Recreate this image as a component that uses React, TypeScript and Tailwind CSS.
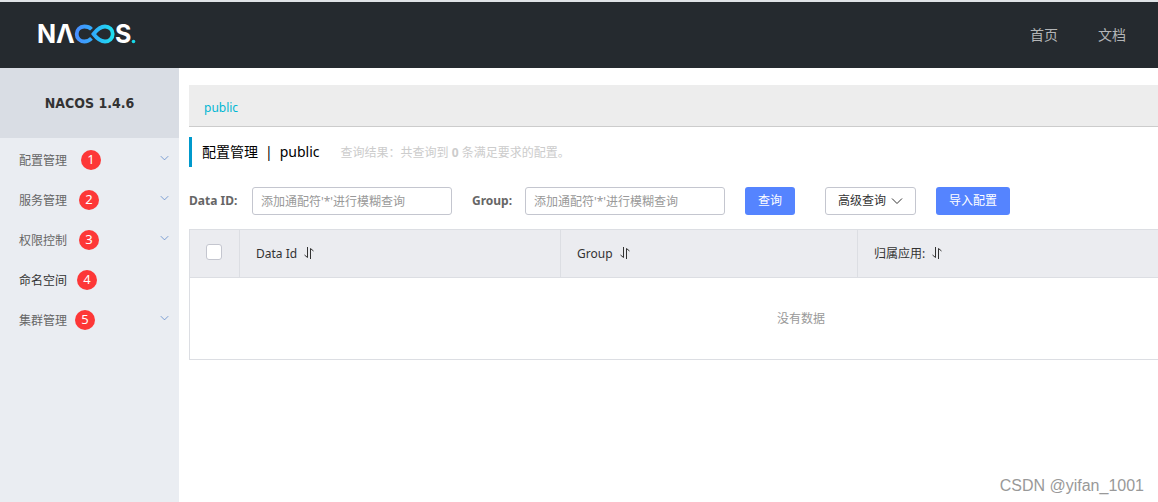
import type { ReactNode } from "react";

type MenuItem = {
  label: string;
  step: number;
  gap: string;
  expandable: boolean;
};

const menu: MenuItem[] = [
  { label: "配置管理", step: 1, gap: "ml-3.5", expandable: true },
  { label: "服务管理", step: 2, gap: "ml-3", expandable: true },
  { label: "权限控制", step: 3, gap: "ml-3", expandable: true },
  { label: "命名空间", step: 4, gap: "ml-2.5", expandable: false },
  { label: "集群管理", step: 5, gap: "ml-2", expandable: true },
];

function Logo() {
  return (
    <svg
      width="106"
      height="36"
      viewBox="-4 -7 106 36"
      role="img"
      aria-label="Nacos"
      className="font-['Inter','Noto_Sans',sans-serif] text-[25px] font-bold"
    >
      <defs>
        <linearGradient id="loop" gradientUnits="userSpaceOnUse" x1="37" y1="0" x2="77" y2="0">
          <stop offset="0" stopColor="#4a8cff" />
          <stop offset="0.5" stopColor="#2fb0fa" />
          <stop offset="1" stopColor="#1de4ee" />
        </linearGradient>
      </defs>
      <text x="-1" y="19" fill="#fff">N</text>
      <text x="18" y="19" fill="#fff">Λ</text>
      <text x="77" y="19" fill="#fff">S</text>
      <g fill="none" stroke="url(#loop)" strokeWidth="3.8">
        <path d="M53.5 5.2C51.6 3.2 49.3 2.5 46.3 2.5C41.7 2.5 38.7 5.9 38.7 10C38.7 14.1 41.7 17.5 46.3 17.5C49.3 17.5 51.5 16.4 53.5 14.4" />
        <path d="M55.5 10C59 5.5 61.9 2.5 67 2.5C71.5 2.5 74.7 5.9 74.7 10C74.7 14.1 71.5 17.5 67 17.5C61.9 17.5 59 14.5 55.5 10Z" />
      </g>
      <circle cx="95.5" cy="17.5" r="1.8" fill="#17d8e8" />
    </svg>
  );
}

function ChevronDown({ className }: { className: string }) {
  return (
    <svg viewBox="0 0 12 8" fill="none" stroke="currentColor" className={className} aria-hidden="true">
      <path d="M1 1.5L6 6.5L11 1.5" />
    </svg>
  );
}

function SortIcon() {
  return (
    <svg width="12" height="12" viewBox="0 0 12 12" fill="none" stroke="currentColor" aria-hidden="true">
      <path d="M4.5 0V10.5L1.5 8M7.5 12V1.5L10.5 4" />
    </svg>
  );
}

function SortableHead({ className, children }: { className?: string; children: ReactNode }) {
  return (
    <th className={`border-l border-[#dcdee3] px-4 text-left font-normal ${className ?? ""}`}>
      <span className="flex items-center gap-1.5">
        {children}
        <button type="button" aria-label="排序" className="pb-0.5">
          <SortIcon />
        </button>
      </span>
    </th>
  );
}

function Header() {
  return (
    <header className="flex h-[68px] items-center justify-between border-t-2 border-[#dfe3e6] bg-[#252a2f] pr-8 pl-[34px]">
      <a href="#home">
        <Logo />
      </a>
      <nav className="flex gap-10 text-sm text-[#b3b5b7]">
        <a href="#index">首页</a>
        <a href="#docs">文档</a>
      </nav>
    </header>
  );
}

function Sidebar() {
  return (
    <aside className="w-[179px] shrink-0 bg-[#eaedf2]">
      <h1 className="flex h-[70px] items-center justify-center bg-[#d9dde4] font-['DejaVu_Sans_Condensed','DejaVu_Sans',sans-serif] text-sm font-bold text-[#333]">
        NACOS 1.4.6
      </h1>
      <ul className="pt-0.5">
        {menu.map((item) => (
          <li key={item.label}>
            <a
              href={`#menu-${item.step}`}
              className={`flex h-10 items-center pr-2.5 pl-[19px] ${item.expandable ? "text-[#666]" : "text-[#333]"}`}
            >
              <span className="pt-0.5">{item.label}</span>
              <span
                className={`flex size-5 items-center justify-center rounded-full bg-[#fd3737] text-[13px] text-white ${item.gap}`}
              >
                {item.step}
              </span>
              {item.expandable && <ChevronDown className="mb-1 ml-auto h-[6px] w-[9px] text-[#5584c8]" />}
            </a>
          </li>
        ))}
      </ul>
    </aside>
  );
}

function SearchForm() {
  return (
    <form className="mt-5 flex h-7 items-center whitespace-nowrap">
      <label htmlFor="dataId" className="w-[63px] font-bold text-[#666]">
        Data ID:
      </label>
      <input
        id="dataId"
        placeholder="添加通配符'*'进行模糊查询"
        className="h-7 w-[200px] rounded-[3px] border border-[#c4c6cf] px-2 placeholder:text-[#999]"
      />
      <label htmlFor="group" className="ml-5 w-[53px] font-bold text-[#666]">
        Group:
      </label>
      <input
        id="group"
        placeholder="添加通配符'*'进行模糊查询"
        className="h-7 w-[200px] rounded-[3px] border border-[#c4c6cf] px-2 placeholder:text-[#999]"
      />
      <button type="button" className="ml-5 h-7 rounded-[3px] bg-[#5584ff] px-[13px] text-white">
        查询
      </button>
      <button
        type="button"
        className="ml-[30px] flex h-7 items-center gap-[5px] rounded-[3px] border border-[#c4c6cf] px-3 text-[#333]"
      >
        高级查询
        <ChevronDown className="h-2 w-3 text-[#333]" />
      </button>
      <button type="button" className="ml-5 h-7 rounded-[3px] bg-[#5584ff] px-[13px] text-white">
        导入配置
      </button>
    </form>
  );
}

function ConfigTable() {
  return (
    <div className="mt-3.5 overflow-hidden">
      <table className="w-full min-w-[1224px] table-fixed border-collapse border border-[#dcdee3]">
        <thead className="bg-[#ebecf0] text-[#333]">
          <tr className="h-12 border-b border-[#dcdee3]">
            <th className="w-[50px] pr-0.5 pb-1">
              <input
                type="checkbox"
                aria-label="全选"
                className="mx-auto block size-4 appearance-none rounded-[3px] border border-[#c4c6cf] bg-white"
              />
            </th>
            <SortableHead className="w-[321px]">Data Id</SortableHead>
            <SortableHead className="w-[297px]">Group</SortableHead>
            <SortableHead>归属应用:</SortableHead>
          </tr>
        </thead>
        <tbody>
          <tr>
            <td colSpan={4} className="h-[82px] text-center text-[#999]">
              没有数据
            </td>
          </tr>
        </tbody>
      </table>
    </div>
  );
}

export default function App() {
  return (
    <div className="relative flex min-h-screen flex-col bg-white font-['Noto_Sans','Noto_Sans_CJK_SC',sans-serif] text-xs">
      <Header />
      <div className="flex flex-1">
        <Sidebar />
        <main className="min-w-0 flex-1 pt-[17px] pl-2.5">
          <div className="flex h-[42px] items-center border-b border-[#ccc] bg-[#ededed] px-[15px] pt-1">
            <a href="#public" className="text-[#00b7d3]">
              public
            </a>
          </div>
          <div className="mt-2.5 flex h-[30px] items-center border-l-3 border-[#09c] pl-2.5">
            <h2 className="flex gap-[7px] text-sm text-black">
              <span>配置管理</span>
              <span>|</span>
              <span>public</span>
            </h2>
            <p className="ml-[21px] pt-0.5 text-[#ccc]">
              查询结果：共查询到 <strong>0</strong> 条满足要求的配置。
            </p>
          </div>
          <SearchForm />
          <ConfigTable />
        </main>
      </div>
      <span className="absolute right-3.5 bottom-1 font-['Liberation_Sans',sans-serif] text-base text-[#999]">
        CSDN @yifan_1001
      </span>
    </div>
  );
}
